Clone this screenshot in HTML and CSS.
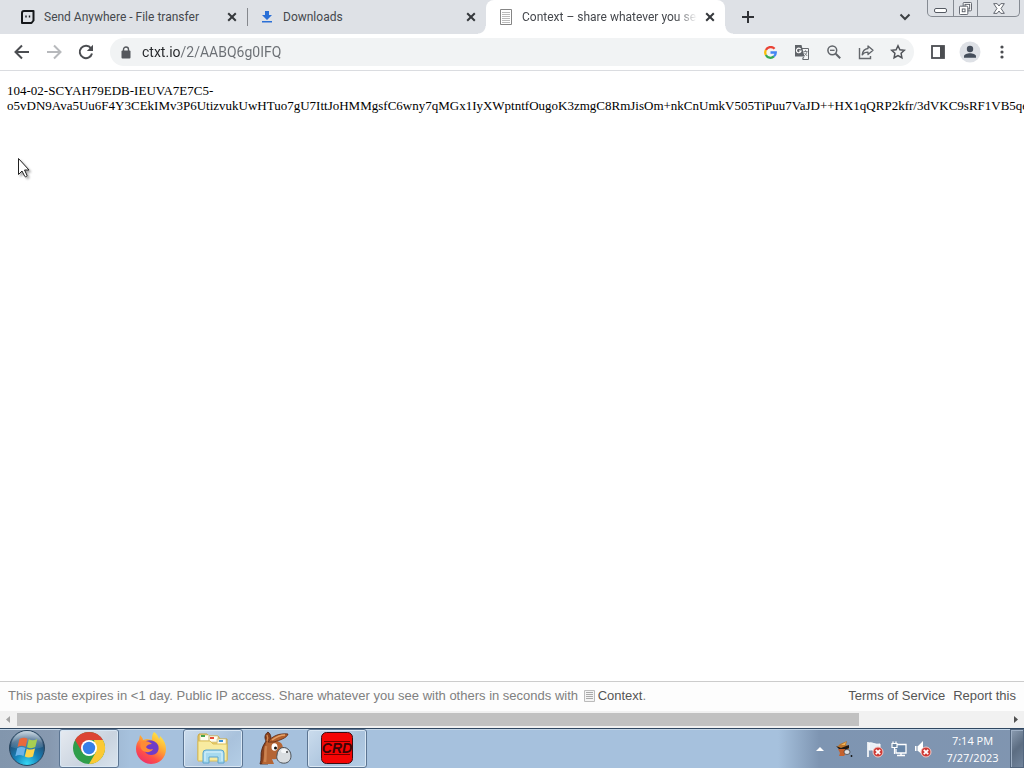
FILE: index.html
```html
<!DOCTYPE html>
<html lang="en">
<head>
<meta charset="utf-8">
<title>Context – share whatever you see</title>
<link rel="stylesheet" href="styles.css">
</head>
<body>
<header class="browser">
  <div class="tabstrip">
    <div class="tab">
      <svg class="favicon" viewBox="0 0 16 16"><path d="M4 2h9.500v9.500L11.500 14H2V4a2 2 0 0 1 2-2z" fill="none" stroke="#15171a" stroke-width="2" stroke-linejoin="round"/><path d="M6 6.500v2M9.500 6.500v2" stroke="#15171a" stroke-width="1.400"/></svg>
      <span class="tab-title">Send Anywhere - File transfer</span>
      <button class="tab-close" aria-label="Close tab"><svg viewBox="0 0 10 10"><path d="M1.2 1.2l7.6 7.6M8.8 1.2L1.2 8.8"/></svg></button>
    </div>
    <div class="tab tab-divided">
      <svg class="favicon" viewBox="0 0 16 16"><path d="M6 2h4v4h3l-5 5-5-5h3zM3 12h10v1.500H3z" fill="#2a6fd6"/></svg>
      <span class="tab-title">Downloads</span>
      <button class="tab-close" aria-label="Close tab"><svg viewBox="0 0 10 10"><path d="M1.2 1.2l7.6 7.6M8.8 1.2L1.2 8.8"/></svg></button>
    </div>
    <div class="tab tab-active">
      <svg class="favicon" viewBox="0 0 16 16"><path d="M2.500 .5h11v15h-11z" fill="#fff" stroke="#858585"/><path d="M4 3.500h8M4 5.500h8M4 7.500h8M4 9.500h8M4 11.500h8M4 13.500h8" stroke="#bbb"/></svg>
      <span class="tab-title">Context – share whatever you see</span>
      <button class="tab-close" aria-label="Close tab"><svg viewBox="0 0 10 10"><path d="M1.2 1.2l7.6 7.6M8.8 1.2L1.2 8.8"/></svg></button>
    </div>
    <button class="new-tab" aria-label="New tab"><svg width="12" height="12" viewBox="0 0 12 12"><path d="M6 0v12M0 6h12" stroke="#303236" stroke-width="2"/></svg></button>
    <button class="tab-search" aria-label="Search tabs"><svg width="12" height="8" viewBox="0 0 12 8"><path d="M1.500 1.500L6 6l4.500-4.500" fill="none" stroke="#3c4043" stroke-width="2"/></svg></button>
    <div class="window-controls">
      <button class="win-min" aria-label="Minimize"><svg width="13" height="5" viewBox="0 0 13 5"><rect x=".5" y=".5" width="12" height="4" rx="1.500" fill="#fff" stroke="#555a63"/></svg></button>
      <button class="win-restore" aria-label="Restore"><svg width="13" height="13" viewBox="0 0 14 14" fill="#fff" stroke="#555a63"><rect x="4.500" y=".5" width="9" height="9" rx="1"/><rect x="6.500" y="2.500" width="5" height="5"/><rect x=".5" y="4.500" width="9" height="9" rx="1"/><rect x="3.500" y="7.500" width="3" height="3"/></svg></button>
      <button class="win-close" aria-label="Close"><svg width="12" height="11" viewBox="0 0 13 12"><path d="M.7.7h3.800l2 2.600 2-2.600h3.800L8.700 6l3.600 5.300H8.500l-2-2.600-2 2.600H.7L4.300 6z" fill="#fff" stroke="#555a63"/></svg></button>
    </div>
  </div>
  <nav class="toolbar">
    <button class="tool" aria-label="Back"><svg width="16" height="16" viewBox="0 0 16 16"><path d="M15 8H2M8 1.500L1.500 8 8 14.500" fill="none" stroke="#4b4d51" stroke-width="2"/></svg></button>
    <button class="tool" aria-label="Forward"><svg width="16" height="16" viewBox="0 0 16 16"><path d="M1 8h13M8 1.500L14.500 8 8 14.500" fill="none" stroke="#b7b9bc" stroke-width="2"/></svg></button>
    <button class="tool" aria-label="Reload"><svg width="16" height="16" viewBox="0 0 16 16"><path d="M13 4.300A6.200 6.200 0 1 0 14 9.500" fill="none" stroke="#4b4d51" stroke-width="2"/><path d="M15 .8V7H8.800z" fill="#4b4d51"/></svg></button>
    <div class="omnibox">
      <svg class="lock" width="10" height="13" viewBox="0 0 10 13"><path d="M2.500 6V3.500a2.500 2.500 0 0 1 5 0V6" fill="none" stroke="#55585d" stroke-width="1.400"/><rect x=".5" y="4.500" width="9" height="8" rx="1" fill="#55585d"/></svg>
      <input class="address" type="text" aria-label="Address" value="ctxt.io/2/AABQ6g0IFQ">
      <button class="tool" aria-label="Google"><svg width="13" height="13" viewBox="0 0 16 16" fill="none" stroke-width="2.800"><path d="M13 3.500A6.400 6.400 0 0 0 2.300 5" stroke="#ea4335"/><path d="M2.300 5a6.400 6.400 0 0 0 0 6" stroke="#fbbc05"/><path d="M2.300 11A6.400 6.400 0 0 0 12.200 12.900" stroke="#34a853"/><path d="M12.200 12.900A6.200 6.200 0 0 0 14.500 8H8" stroke="#4285f4"/></svg></button>
      <button class="tool" aria-label="Translate"><svg width="16" height="16" viewBox="0 0 16 16"><path d="M7 4.500h7.500v11H8.500" fill="#f5f6f7" stroke="#65686c"/><path d="M1 1h6.500l3 11.500H1z" fill="#5f6368"/><path d="M8 14l2.500-1.500L9 15.500z" fill="#5f6368"/><path d="M6.700 5.200A2.300 2.300 0 1 0 7 7H5" fill="none" stroke="#fff" stroke-width="1.200"/><path d="M9.500 7.500h4M11.500 6.200v1.300M13 7.500c-.3 2-1.500 3.500-2.800 4.300M10.200 8.700l3 3.300" fill="none" stroke="#76797d" stroke-width=".9"/></svg></button>
      <button class="tool" aria-label="Zoom"><svg width="14" height="14" viewBox="0 0 14 14"><circle cx="5.300" cy="5.300" r="4.400" fill="none" stroke="#5f6368" stroke-width="1.500"/><path d="M8.700 8.700l4.500 4.500" stroke="#5f6368" stroke-width="2"/><path d="M3 5.300h4.600" stroke="#5f6368" stroke-width="1.300"/></svg></button>
      <button class="tool" aria-label="Share"><svg width="16" height="16" viewBox="0 0 16 16"><path d="M1.500 4v10.500h11V12" fill="none" stroke="#65686c" stroke-width="1.400"/><path d="M10 2l5 4.300-5 4.200V8.200c-2.700 0-4.500.8-5.800 2.700.4-3.500 2.300-6 5.800-6.400z" fill="none" stroke="#5f6368" stroke-width="1.300" stroke-linejoin="round"/></svg></button>
      <button class="tool" aria-label="Bookmark"><svg width="16" height="16" viewBox="0 0 16 16"><path d="M8 1.800l1.900 4 4.400.5-3.200 3 .8 4.400L8 11.500l-3.900 2.200.8-4.400-3.200-3 4.400-.5z" fill="none" stroke="#505358" stroke-width="1.500"/></svg></button>
    </div>
    <button class="tool" aria-label="Side panel"><svg width="14" height="14" viewBox="0 0 14 14"><rect x="1" y="1" width="12" height="12" fill="#fff" stroke="#4b4d51" stroke-width="1.800"/><path d="M9 1h4v12H9z" fill="#4b4d51"/></svg></button>
    <button class="tool" aria-label="Profile"><svg width="22" height="22" viewBox="0 0 22 22"><circle cx="11" cy="11" r="10.500" fill="#dee1e6"/><circle cx="11" cy="8" r="3.200" fill="#454e5b"/><path d="M5 16.800v-1.600c0-2 3.500-3 6-3s6 1 6 3v1.600z" fill="#454e5b"/></svg></button>
    <button class="tool" aria-label="Menu"><svg width="4" height="14" viewBox="0 0 4 14" fill="#4b4d51"><circle cx="2" cy="2" r="1.600"/><circle cx="2" cy="7" r="1.600"/><circle cx="2" cy="12" r="1.600"/></svg></button>
  </nav>
</header>

<main class="paste">
  <p class="paste-text">104-02-SCYAH79EDB-IEUVA7E7C5-<br>o5vDN9Ava5Uu6F4Y3CEkIMv3P6UtizvukUwHTuo7gU7IttJoHMMgsfC6wny7qMGx1IyXWptntfOugoK3zmgC8RmJisOm+nkCnUmkV505TiPuu7VaJD++HX1qQRP2kfr/3dVKC9sRF1VB5qeLd</p>
  <svg class="cursor" width="18" height="24" viewBox="0 0 18 24"><path d="M2.500 1.500v16l3.500-3.500 2.700 5.300c.7 1 2.600.2 2.300-1L8.500 13H13z" fill="#fff" stroke="#222"/></svg>
</main>

<footer class="page-footer">
  <p class="notice">This paste expires in &lt;1 day. Public IP access. Share whatever you see with others in seconds with <a class="brand" href="#"><svg width="11" height="12" viewBox="0 0 11 12"><path d="M.5.500h10v11H.5z" fill="#f4f4f4" stroke="#bbb"/><path d="M2 2.500h7M2 4.500h7M2 6.500h7M2 8.500h7" stroke="#aaa"/></svg>Context</a>.</p>
  <a href="#">Terms of Service</a>
  <a href="#">Report this</a>
</footer>

<div class="scrollbar">
  <svg width="17" height="17" viewBox="0 0 17 17"><path d="M10 5v7L6 8.500z" fill="#a3a3a3"/></svg>
  <div class="track"><div class="thumb"></div></div>
  <svg width="17" height="17" viewBox="0 0 17 17"><path d="M7 5v7l4-3.500z" fill="#505050"/></svg>
</div>

<div class="taskbar">
  <button class="start" aria-label="Start">
    <svg width="38" height="38" viewBox="0 0 38 38">
      <defs>
        <radialGradient id="orb" cx=".5" cy=".95" r=".9"><stop offset="0" stop-color="#35d7f4"/><stop offset=".4" stop-color="#1682ba"/><stop offset=".8" stop-color="#254b70"/><stop offset="1" stop-color="#7892a8"/></radialGradient>
        <linearGradient id="gloss" x1="0" y1="0" x2="0" y2="1"><stop offset="0" stop-color="#e5eef5" stop-opacity=".7"/><stop offset="1" stop-color="#b9d3e5" stop-opacity=".1"/></linearGradient>
      </defs>
      <circle cx="19" cy="19" r="17.500" fill="url(#orb)" stroke="#28455f"/>
      <path d="M3 18a16 16 0 0 1 32 0c-9 3-23 3-32 0z" fill="url(#gloss)"/>
      <path d="M11.500 10c3-1.700 5.500-1.700 8-.3l-1.800 8c-2.800-1.300-5.200-1.300-8.200.2z" fill="#e9683c"/>
      <path d="M20.800 10.300c2.700 1.400 5.200 1.400 8.500-.2l-2 8c-2.900 1.500-5.400 1.500-8.300.2z" fill="#a7cf52"/>
      <path d="M9.200 19.200c2.800-1.500 5.500-1.400 8.200-.2l-1.900 8c-2.700-1.300-5.400-1.200-8.200.3z" fill="#6cb3e9"/>
      <path d="M18.700 19.700c2.800 1.300 5.400 1.200 8.300-.2l-2 8c-2.800 1.400-5.400 1.500-8.200.1z" fill="#fbd44b"/>
    </svg>
  </button>
  <div class="apps">
    <button class="app app-open app-bright" aria-label="Chrome">
      <svg width="34" height="34" viewBox="0 0 34 34"><circle cx="17" cy="17" r="16" fill="#2f9e4b"/><path d="M3.100 9A16 16 0 0 1 30.900 9H17L10 21z" fill="#dc4434"/><path d="M30.900 9A16 16 0 0 1 17 33l7-12-2-12z" fill="#fbc934"/><circle cx="17" cy="17" r="8" fill="#fff"/><circle cx="17" cy="17" r="6.200" fill="#377fe8"/></svg>
    </button>
    <button class="app" aria-label="Firefox">
      <svg width="34" height="34" viewBox="0 0 34 34">
        <defs><linearGradient id="fox" x1=".8" y1="0" x2=".2" y2="1"><stop offset="0" stop-color="#fff04a"/><stop offset=".4" stop-color="#ffa532"/><stop offset=".7" stop-color="#ff5146"/><stop offset="1" stop-color="#e92a72"/></linearGradient></defs>
        <path d="M20 1c3 2 4 4 5 7 1-1 1-2 1-3 4 4 6 8 6 13 0 9-7 15-15 15S2 26 2 18c0-4 1-7 3-9l1-5c1 1 3 3 3 5l4-1c2 0 4 1 5 1 0-3 0-6 2-8z" fill="url(#fox)"/>
        <path d="M12 10c4-2 10 0 12 4 2 5-1 10-7 10-4 0-7-3-7-7 0-3 0-5 2-7z" fill="#713bc8"/>
        <path d="M7 11c3-2 8-1 11 2-3 0-5 1-6 3 1 2 4 3 7 2-2 4-8 4-11 1-2-2-2-5-1-8z" fill="#ff8b35"/>
      </svg>
    </button>
    <button class="app app-open" aria-label="File Explorer">
      <svg width="34" height="34" viewBox="0 0 34 34"><path d="M2 5l1-2h8l2 2h9l2 3h7v21H2z" fill="#e9ca68" stroke="#c7a541"/><path d="M4 4h9v6H4zM13 5h9v6h-9zM21 8h9v6h-9z" fill="#fffdf2" stroke="#d1c183" stroke-width=".7"/><path d="M5 4h4v2H5z" fill="#48a34d"/><path d="M14 6h4v2h-4z" fill="#e84c37"/><path d="M23 9h4v2h-4z" fill="#3d92d5"/><path d="M2 10h12l3 3h14v17H2z" fill="#f8eba0" stroke="#dbbf58"/><path d="M7 32V22q0-3 3-3h15q3 0 3 3v10h-6v-6h-9v6z" fill="#a7daef" stroke="#5aa4ce"/><path d="M9 30v-8q0-1 1-1h15q1 0 1 1v8" fill="none" stroke="#e0f5fc"/></svg>
    </button>
    <button class="app" aria-label="eMule">
      <svg width="36" height="34" viewBox="0 0 36 34">
        <path d="M3 33c2-5 0-10 2-15 1-4 3-6 4-8C7 6 8 3 11 1c3 2 3 5 3 8l-3 24z" fill="#8a421e" stroke="#4a2113" stroke-width=".8"/>
        <path d="M10 10c5-2 10-1 14 2 3 3 2 9 0 12-2 4-6 5-9 4l2 5H5c3-6 1-16 5-23z" fill="#b56534"/>
        <path d="M11 11c4-6 11-9 20-8-1 4-8 6-14 8z" fill="#b4602d" stroke="#5b2915" stroke-width=".8"/>
        <path d="M15 9c4-3 8-5 13-5" fill="none" stroke="#e4a269" stroke-width="1.400"/>
        <path d="M10 4c1 2 1 4 0 6" fill="none" stroke="#d58a50" stroke-width="1.400"/>
        <path d="M9 15c-1 6 0 10-1 16" fill="none" stroke="#cc8350" stroke-width="2.500"/>
        <ellipse cx="17.500" cy="16" rx="3" ry="3.800" fill="#fff"/><circle cx="18.500" cy="17" r="1.500" fill="#111"/>
        <path d="M24 17c5-2 10 2 10 8 0 5-4 8-9 7-4-1-6-4-5-8 0-3 2-6 4-7z" fill="#d9dde0" stroke="#4c5156"/>
        <ellipse cx="27" cy="20" rx="3" ry="2" fill="#f5f7f8"/><circle cx="30" cy="21" r=".9" fill="#333"/>
      </svg>
    </button>
    <button class="app app-open" aria-label="CRD">
      <svg width="34" height="34" viewBox="0 0 34 34"><rect x="1.500" y="1.500" width="31" height="31" rx="5" fill="#f40505" stroke="#390d13"/><path d="M4 10.500h26M4 23.500h26" stroke="#710000"/><text class="crd" x="17" y="22" text-anchor="middle">CRD</text></svg>
    </button>
  </div>
  <div class="tray">
    <button class="tray-arrow" aria-label="Show hidden icons"><svg width="8" height="5" viewBox="0 0 8 5"><path d="M0 5l4-4 4 4z" fill="#fff"/></svg></button>
    <button class="tray-icon" aria-label="eMule"><svg width="18" height="18" viewBox="0 0 18 18"><path d="M2 7l3-3 7-3-1 4 3 1v3H5z" fill="#b9752f"/><path d="M1 6l5 2 8-3v3l-4 2H5z" fill="#1d1715"/><path d="M3 9h7l1 4-2 3H4l1-3z" fill="#c5622e"/><path d="M6 5l5-3-1 3z" fill="#efb458"/><ellipse cx="12" cy="12" rx="3" ry="2.500" fill="#dfe2e5" stroke="#3a3532" stroke-width=".7"/><circle cx="16.500" cy="16" r=".9" fill="#111"/></svg></button>
    <button class="tray-icon tray-gap" aria-label="Action Center"><svg width="18" height="18" viewBox="0 0 18 18"><path d="M2 2v15" stroke="#fff" stroke-width="1.600"/><path d="M3 3c4-1 5 2 11 1v7C9 12 7 9 3 10z" fill="#e9eff6" stroke="#fff"/><circle cx="12" cy="12" r="5" fill="#cf3934" stroke="#f2cac7"/><path d="M9.800 9.800l4.400 4.400m0-4.400l-4.400 4.400" stroke="#fff" stroke-width="1.800"/></svg></button>
    <button class="tray-icon" aria-label="Network"><svg width="18" height="18" viewBox="0 0 18 18"><path d="M7 4.500h9v8.500H6V9" fill="#6886a8" stroke="#fff" stroke-width="1.300"/><path d="M7 15.500h8M11 13v2" stroke="#fff" stroke-width="1.400"/><path d="M2 3.500h5v4H2zM3 1.500v2M6 1.500v2M4.500 7.500V14" fill="#6e87a2" stroke="#fff" stroke-width="1.200"/></svg></button>
    <button class="tray-icon" aria-label="Volume"><svg width="18" height="18" viewBox="0 0 18 18"><path d="M1 6h3l5-5v14l-5-4H1z" fill="#fff"/><path d="M3 6v5" stroke="#7c91aa"/><circle cx="12" cy="12" r="5" fill="#cf3934" stroke="#f2cac7"/><path d="M9.800 9.800l4.400 4.400m0-4.400l-4.400 4.400" stroke="#fff" stroke-width="1.800"/></svg></button>
    <div class="clock"><span>7:14 PM</span><span>7/27/2023</span></div>
    <button class="show-desktop" aria-label="Show desktop"></button>
  </div>
</div>
</body>
</html>
```

FILE: styles.css
```css
* { box-sizing: border-box; }

body {
  margin: 0;
  height: 100vh;
  display: flex;
  flex-direction: column;
  overflow: hidden;
  background: #fff;
  font-family: "Liberation Sans", Arial, sans-serif;
}

button {
  margin: 0;
  padding: 0;
  border: 0;
  background: none;
  display: flex;
  align-items: center;
  justify-content: center;
}

a { color: #555; text-decoration: none; }

.browser { font-family: Roboto, "Noto Sans", sans-serif; }

.tabstrip {
  display: flex;
  height: 34px;
  padding: 0 4px 0 8px;
  background: #dee1e6;
}

.tab {
  flex: 0 1 239px;
  min-width: 0;
  display: flex;
  align-items: center;
  gap: 8px;
  padding: 0 10px 0 12px;
  position: relative;
}

.tab-divided::before {
  content: "";
  position: absolute;
  left: 0;
  top: 8px;
  width: 1px;
  height: 18px;
  background: #85888d;
}

.tab-active { background: #fff; border-radius: 8px 8px 0 0; }

.tab-active::before,
.tab-active::after {
  content: "";
  position: absolute;
  bottom: 0;
  width: 8px;
  height: 8px;
}

.tab-active::before { right: 100%; background: radial-gradient(circle at 0 0, #dee1e6 7px, #fff 8px); }
.tab-active::after { left: 100%; background: radial-gradient(circle at 100% 0, #dee1e6 7px, #fff 8px); }

.favicon { flex: none; width: 16px; height: 16px; }

.tab-title {
  flex: 1;
  min-width: 0;
  overflow: hidden;
  white-space: nowrap;
  font-size: 12px;
  line-height: 18px;
  color: #45484d;
}

.tab-active .tab-title {
  -webkit-mask-image: linear-gradient(90deg, #000 88%, transparent);
  mask-image: linear-gradient(90deg, #000 88%, transparent);
}

.tab-close { flex: none; width: 10px; height: 16px; }
.tab-close svg { width: 10px; height: 10px; fill: none; stroke: #35383c; stroke-width: 2; }

.new-tab { width: 30px; margin-left: 8px; }
.tab-search { width: 28px; margin-left: auto; margin-right: 8px; }

.window-controls {
  display: flex;
  height: 17px;
  border: 1px solid #858a92;
  border-top: 0;
  border-radius: 0 0 5px 5px;
}

.win-min { width: 25px; align-items: flex-end; padding-bottom: 3px; }
.win-restore { width: 25px; border: solid #858a92; border-width: 0 1px; }
.win-close { width: 41px; }

.toolbar {
  display: flex;
  align-items: center;
  height: 37px;
  padding: 0 6px;
  border-bottom: 1px solid #dadce0;
}

.tool { flex: none; width: 32px; height: 28px; }

.omnibox {
  flex: 1;
  min-width: 0;
  display: flex;
  align-items: center;
  height: 28px;
  margin: 0 8px;
  padding-left: 11px;
  border-radius: 14px;
  background: #f1f3f4;
}

.lock { flex: none; margin-right: 11px; }

.address {
  flex: 1;
  min-width: 0;
  padding: 0;
  border: 0;
  outline: 0;
  font: 14px/20px Roboto, "Noto Sans", sans-serif;
  color: transparent;
  background: linear-gradient(90deg, #25272a 39px, #6a6e73 39px);
  -webkit-background-clip: text;
  background-clip: text;
}

.paste {
  flex: 1;
  min-height: 0;
  position: relative;
  overflow: hidden;
  padding: 12px 7px;
}

.paste-text {
  margin: 0;
  white-space: nowrap;
  font: 13px/15px "Liberation Serif", "Times New Roman", serif;
  color: #000;
}

.cursor {
  position: absolute;
  left: 16px;
  top: 86px;
  filter: drop-shadow(2px 2px 1px #0005);
}

.page-footer {
  display: flex;
  align-items: center;
  gap: 8px;
  height: 30px;
  padding: 0 8px 2px;
  border-top: 1px solid #ccc;
  background: #fdfdfd;
  font-size: 13px;
  line-height: 16px;
}

.notice { flex: 1; margin: 0; color: #808080; white-space: nowrap; }
.brand svg { margin: 0 3px 0 2px; vertical-align: -2px; }

.scrollbar { display: flex; height: 17px; background: #f1f1f1; }
.track { flex: 1; padding: 2px 0; }
.thumb { width: 85%; height: 13px; background: #c1c1c1; }

.taskbar {
  display: flex;
  height: 40px;
  border-top: 1px solid #2f4761;
  box-shadow: inset 0 1px #c4d7e9;
  background: linear-gradient(90deg, #8296ad 0, #8799b0 50px, #a6c1dd 130px, #a6c1dd 76%, #7e95b2 80%, #8095b0);
}

.start { width: 54px; margin-right: 5px; padding-bottom: 1px; }

.apps { display: flex; gap: 2px; flex: 1; }

.app { width: 60px; border-radius: 3px; padding-bottom: 2px; }

.app-open {
  border: 1px solid #5c7592;
  box-shadow: inset 0 0 0 1px #d9e7f4;
  background: linear-gradient(135deg, #cbdced, #a9c2dc 60%, #b4cee6);
}

.app-bright { background: linear-gradient(135deg, #e6eaf0, #c9d3df 60%, #d9e4ee); }

.crd { font: italic bold 14px "Liberation Sans", sans-serif; fill: #3b0508; }

.tray { display: flex; align-items: center; }
.tray-arrow { width: 24px; height: 24px; }
.tray-icon { width: 24px; height: 24px; }
.tray-gap { margin-left: 7px; }

.clock {
  display: flex;
  flex-direction: column;
  align-items: center;
  width: 75px;
  font: 11px/17px "Open Sans", "Noto Sans", sans-serif;
  color: #fff;
}

.show-desktop {
  align-self: stretch;
  width: 14px;
  border: 1px solid #52657d;
  box-shadow: inset 1px 1px #9fb0c5;
  background: linear-gradient(135deg, #8c9db2, #5c6d82 50%, #71849c);
}
```
